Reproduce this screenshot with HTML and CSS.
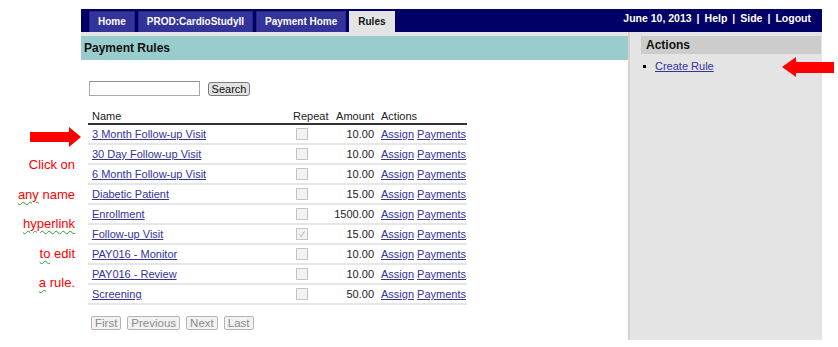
FILE: index.html
```html
<!DOCTYPE html>
<html>
<head>
<meta charset="utf-8">
<link rel="stylesheet" href="styles.css">
</head>
<body>
<div class="page">
  <div class="annot">
    <svg class="arrow-right" width="52" height="21" viewBox="0 0 52 21"><polygon points="0,5 39,5 39,0 51,10 39,20 39,15 0,15" fill="#ff0000"/></svg>
    <div class="note">Click on</div>
    <div class="note"><span class="sp">any</span> name</div>
    <div class="note"><span class="sp">hyperlink</span></div>
    <div class="note"><span class="sp">to</span> edit</div>
    <div class="note"><span class="sp">a</span> rule.</div>
  </div>
  <div class="app">
    <div class="topbar">
      <div class="tabs">
        <div class="tab">Home</div>
        <div class="tab">PROD:CardioStudyII</div>
        <div class="tab">Payment Home</div>
        <div class="tab active">Rules</div>
      </div>
      <div class="util">June 10, 2013<span class="pipe">|</span>Help<span class="pipe">|</span>Side<span class="pipe">|</span>Logout</div>
    </div>
    <div class="body">
      <div class="main">
        <div class="title">Payment Rules</div>
        <div class="content">
          <div class="search">
            <input class="search-input" type="text">
            <button class="btn-search">Search</button>
          </div>
          <table class="rules">
            <colgroup><col class="c1"><col class="c2"><col class="c3"><col class="c4"></colgroup>
            <thead>
              <tr><th class="name">Name</th><th class="rep">Repeat</th><th class="amt">Amount</th><th class="act">Actions</th></tr>
            </thead>
            <tbody>
              <tr><td class="name"><a href="#">3 Month Follow-up Visit</a></td><td class="rep"><span class="cb"></span></td><td class="amt">10.00</td><td class="act"><a href="#">Assign</a> <a href="#">Payments</a></td></tr>
              <tr><td class="name"><a href="#">30 Day Follow-up Visit</a></td><td class="rep"><span class="cb"></span></td><td class="amt">10.00</td><td class="act"><a href="#">Assign</a> <a href="#">Payments</a></td></tr>
              <tr><td class="name"><a href="#">6 Month Follow-up Visit</a></td><td class="rep"><span class="cb"></span></td><td class="amt">10.00</td><td class="act"><a href="#">Assign</a> <a href="#">Payments</a></td></tr>
              <tr><td class="name"><a href="#">Diabetic Patient</a></td><td class="rep"><span class="cb"></span></td><td class="amt">15.00</td><td class="act"><a href="#">Assign</a> <a href="#">Payments</a></td></tr>
              <tr><td class="name"><a href="#">Enrollment</a></td><td class="rep"><span class="cb"></span></td><td class="amt">1500.00</td><td class="act"><a href="#">Assign</a> <a href="#">Payments</a></td></tr>
              <tr><td class="name"><a href="#">Follow-up Visit</a></td><td class="rep"><span class="cb"><svg width="10" height="10" viewBox="0 0 10 10"><polyline points="2.5,5.5 4.2,7.5 7.5,2.5" fill="none" stroke="#b0b0b0" stroke-width="1"/></svg></span></td><td class="amt">15.00</td><td class="act"><a href="#">Assign</a> <a href="#">Payments</a></td></tr>
              <tr><td class="name"><a href="#">PAY016 - Monitor</a></td><td class="rep"><span class="cb"></span></td><td class="amt">10.00</td><td class="act"><a href="#">Assign</a> <a href="#">Payments</a></td></tr>
              <tr><td class="name"><a href="#">PAY016 - Review</a></td><td class="rep"><span class="cb"></span></td><td class="amt">10.00</td><td class="act"><a href="#">Assign</a> <a href="#">Payments</a></td></tr>
              <tr><td class="name"><a href="#">Screening</a></td><td class="rep"><span class="cb"></span></td><td class="amt">50.00</td><td class="act"><a href="#">Assign</a> <a href="#">Payments</a></td></tr>
            </tbody>
          </table>
          <div class="pager">
            <button class="pbtn">First</button>
            <button class="pbtn">Previous</button>
            <button class="pbtn">Next</button>
            <button class="pbtn">Last</button>
          </div>
        </div>
      </div>
      <div class="side">
        <div class="side-head">Actions</div>
        <ul class="side-list">
          <li><a href="#">Create Rule</a></li>
        </ul>
        <svg class="arrow-left" width="52" height="20" viewBox="0 0 52 20"><polygon points="0,10 14,0 14,5 52,5 52,16 14,16 14,20" fill="#ff0000"/></svg>
      </div>
    </div>
  </div>
</div>
</body>
</html>
```

FILE: styles.css
```css
html, body {
  margin: 0;
  padding: 0;
  background: #ffffff;
}
body {
  font-family: "Liberation Sans", Arial, sans-serif;
  font-size: 11px;
  color: #222;
}
.page {
  display: flex;
  padding-top: 9px;
}
.annot {
  width: 81px;
  flex-shrink: 0;
  display: flex;
  flex-direction: column;
  align-items: flex-end;
}
.arrow-right {
  display: block;
  margin-top: 118px;
  margin-right: -1px;
  margin-bottom: 2px;
}
.note {
  color: #ff0000;
  font-size: 13px;
  line-height: 29.5px;
  padding-right: 6px;
  white-space: nowrap;
}
.sp {
  text-decoration: underline wavy #2e9e2e;
  text-decoration-thickness: 1px;
  text-underline-offset: 2px;
}
.app {
  width: 741px;
  display: flex;
  flex-direction: column;
}
.topbar {
  height: 23px;
  background: #000066;
  display: flex;
  justify-content: space-between;
  align-items: flex-start;
}
.tabs {
  display: flex;
  gap: 3px;
  padding-left: 8px;
  margin-top: 2px;
}
.tab {
  height: 21px;
  padding: 0 8px;
  background: #333399;
  color: #ffffff;
  font-weight: bold;
  font-size: 10px;
  box-sizing: border-box;
  border: 1px solid #26268a;
  border-bottom: none;
  line-height: 19px;
}
.tab.active {
  background: #e4e4e4;
  color: #111;
  border-color: #e4e4e4;
}
.util {
  color: #ffffff;
  font-weight: bold;
  font-size: 10.5px;
  padding-top: 3px;
  padding-right: 11px;
  line-height: 13px;
}
.pipe {
  padding: 0 5px;
}
.body {
  display: flex;
  height: 308px;
}
.main {
  width: 547px;
  flex-shrink: 0;
  border-top: 4px solid #e4e4e4;
  background: #ffffff;
}
.title {
  height: 24px;
  line-height: 24px;
  background: #99cccc;
  font-weight: bold;
  font-size: 12px;
  color: #111;
  padding-left: 3px;
}
.content {
  padding-left: 7px;
  padding-top: 21px;
}
.search {
  display: flex;
  align-items: flex-start;
  gap: 7px;
  height: 15px;
}
.search-input {
  margin: 0 0 0 1px;
  width: 111px;
  height: 15px;
  box-sizing: border-box;
  border: 1px solid #a9a9a9;
  border-top-color: #8f8f8f;
  padding: 0;
  background: #fff;
}
.btn-search {
  margin: 1px 0 0 1px;
  width: 42px;
  height: 14px;
  box-sizing: border-box;
  padding: 0;
  font-family: "Liberation Sans", Arial, sans-serif;
  font-size: 11px;
  line-height: 12px;
  color: #111;
  background: #e2e2e2;
  border: 1px solid #7a7a7a;
  border-radius: 3px;
}
.rules {
  margin-top: 10px;
  border-collapse: collapse;
  table-layout: fixed;
  width: 379px;
}
.c1 { width: 202px; }
.c2 { width: 41px; }
.c3 { width: 46px; }
.c4 { width: 90px; }
.rules th {
  font-weight: normal;
  text-align: left;
  color: #222;
  height: 17px;
  padding: 4px 0 0 0;
  line-height: 13px;
  vertical-align: top;
  border-bottom: 2px solid #333333;
  box-sizing: border-box;
}
.rules th.name { padding-left: 4px; }
.rules th.rep { padding-left: 3px; }
.rules th.amt { text-align: right; padding-right: 3px; }
.rules th.act { padding-left: 4px; }
.rules td {
  height: 20px;
  padding: 0;
  line-height: 18px;
  border-bottom: 2px solid #e6e6e6;
  box-sizing: border-box;
  white-space: nowrap;
  vertical-align: top;
}
.rules td.name { padding-left: 4px; }
.rules td.rep { padding-left: 6px; }
.rules td.amt { text-align: right; padding-right: 3px; color: #222; }
.rules td.act { padding-left: 4px; }
.rules a, .side-list a {
  color: #333399;
  text-decoration: underline;
}
.cb {
  display: inline-block;
  width: 12px;
  height: 12px;
  box-sizing: border-box;
  border: 1px solid #c4c4c4;
  background: #f2f2f2;
  vertical-align: middle;
  margin-top: -2px;
}
.cb svg {
  display: block;
}
.pager {
  display: flex;
  gap: 6px;
  margin-top: 11px;
  padding-left: 3px;
}
.pbtn {
  margin: 0;
  height: 14px;
  box-sizing: border-box;
  padding: 0 3px;
  font-family: "Liberation Sans", Arial, sans-serif;
  font-size: 11.5px;
  line-height: 12px;
  color: #8a8a8a;
  background: #f2f2f2;
  border: 1px solid #b4b4b4;
  border-radius: 2px;
}
.side {
  flex: 1;
  position: relative;
  background: #e4e4e4;
  border-left: 2px solid #d2d2d2;
  padding: 4px 1px 0 11px;
}
.side-head {
  height: 18px;
  line-height: 18px;
  background: #cccccc;
  font-weight: bold;
  font-size: 12px;
  color: #111;
  padding-left: 5px;
}
.side-list {
  list-style: none;
  margin: 5px 0 0 0;
  padding: 0 0 0 2px;
}
.side-list li {
  display: flex;
  align-items: center;
  line-height: 14px;
  font-size: 11px;
}
.side-list li::before {
  content: "";
  width: 3px;
  height: 3px;
  background: #000;
  margin-right: 9px;
}
.arrow-left {
  position: absolute;
  left: 152px;
  top: 25px;
}
```
